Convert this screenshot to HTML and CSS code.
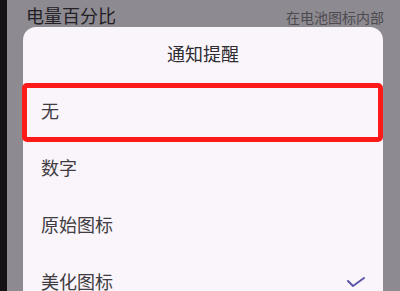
FILE: index.html
```html
<!DOCTYPE html>
<html>
<head>
<meta charset="utf-8">
<link rel="stylesheet" href="styles.css">
</head>
<body>
<div class="screen">
  <div class="edge"></div>
  <div class="page">
    <div class="setting">
      <span class="label">电量百分比</span>
      <span class="value">在电池图标内部</span>
    </div>
  </div>
  <div class="dialog">
    <div class="title">通知提醒</div>
    <div class="option">无<div class="highlight"></div></div>
    <div class="option">数字</div>
    <div class="option">原始图标</div>
    <div class="option">美化图标
      <svg class="check" width="18" height="10" viewBox="0 0 18 10"><polyline points="1,4 6,9 17,1" fill="none" stroke="#5b55a8" stroke-width="2" stroke-linecap="round" stroke-linejoin="round"/></svg>
    </div>
  </div>
</div>
</body>
</html>
```
FILE: styles.css
```css
html, body {
  margin: 0;
  padding: 0;
}
body {
  width: 400px;
  height: 291px;
  overflow: hidden;
  font-family: "Noto Sans CJK SC", "Noto Sans", sans-serif;
}
.screen {
  position: relative;
  display: flex;
  width: 400px;
  height: 291px;
  overflow: hidden;
  background: #8e8a91;
}
.edge {
  width: 7px;
  background: #141214;
  flex: none;
}
.page {
  flex: 1;
}
.setting {
  display: flex;
  justify-content: space-between;
  align-items: center;
  padding: 2px 16px 0 19px;
  height: 28px;
  box-sizing: border-box;
}
.label {
  font-size: 18px;
  line-height: 20px;
  color: #232125;
}
.value {
  font-size: 14px;
  line-height: 16px;
  color: #4d4a50;
  margin-top: 3px;
}
.dialog {
  position: absolute;
  left: 23px;
  top: 27px;
  width: 360px;
  height: 264px;
  background: #faf5fb;
  border-radius: 13px 13px 0 0;
}
.title {
  height: 56px;
  display: flex;
  align-items: center;
  justify-content: center;
  font-size: 18px;
  line-height: 20px;
  color: #2e2c30;
  padding-bottom: 4px;
  box-sizing: border-box;
}
.option {
  position: relative;
  height: 57px;
  display: flex;
  align-items: center;
  padding-left: 18px;
  padding-bottom: 4px;
  box-sizing: border-box;
  font-size: 18px;
  line-height: 20px;
  color: #3f3c42;
}
.highlight {
  position: absolute;
  left: -1px;
  right: 0;
  top: 0;
  bottom: -2px;
  border: 5px solid #ff1a1a;
  border-radius: 5px;
}
.check {
  position: absolute;
  right: 18px;
  top: 23px;
}
```
